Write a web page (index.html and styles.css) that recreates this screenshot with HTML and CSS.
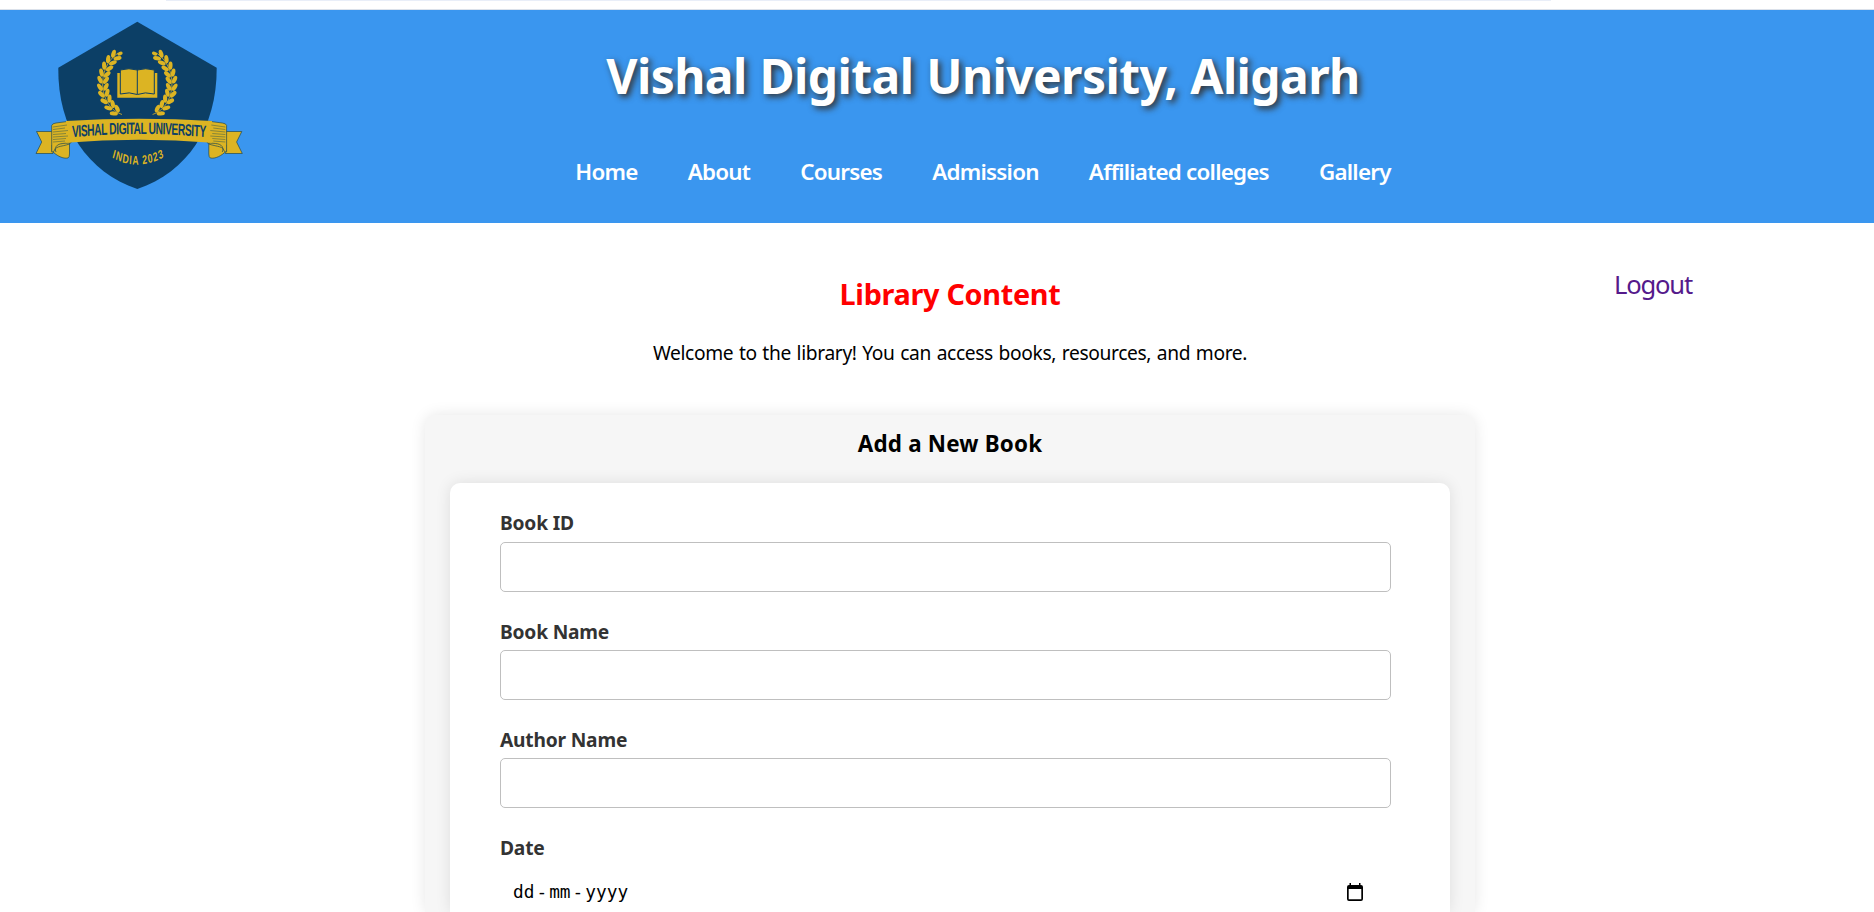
FILE: index.html
```html
<!DOCTYPE html>
<html lang="en">
<head>
<meta charset="utf-8">
<title>Library</title>
<link rel="stylesheet" href="styles.css">
</head>
<body>
<div class="strip"><div class="strip-line"></div></div>
<header class="header">
  <svg class="logo" viewBox="0 0 210 213" width="210" height="213">
    <defs>
      <g id="leafpair">
        <ellipse cx="-3" cy="0" rx="2.1" ry="4.1" transform="rotate(-30 -3 0)"/>
        <ellipse cx="3" cy="0" rx="2.1" ry="4.1" transform="rotate(30 3 0)"/>
      </g>
      <g id="laurel" fill="#dcb423">
        <path d="M87 104.500 C64 97 60 59 83 43" fill="none" stroke="#dcb423" stroke-width=".8"/>
        <use href="#leafpair" transform="translate(80.500 101) rotate(-56)"/>
        <use href="#leafpair" transform="translate(75.500 96) rotate(-42)"/>
        <use href="#leafpair" transform="translate(71.800 90) rotate(-27)"/>
        <use href="#leafpair" transform="translate(69.300 83.500) rotate(-15)"/>
        <use href="#leafpair" transform="translate(68 77) rotate(-4)"/>
        <use href="#leafpair" transform="translate(68 70) rotate(6)"/>
        <use href="#leafpair" transform="translate(69.300 63.500) rotate(18)"/>
        <use href="#leafpair" transform="translate(71.800 57) rotate(28)"/>
        <use href="#leafpair" transform="translate(75.500 51) rotate(38)"/>
        <use href="#leafpair" transform="translate(80.500 46) rotate(48)"/>
        <ellipse cx="85" cy="43.600" rx="1.900" ry="2.800" transform="rotate(65 85 43.600)"/>
      </g>
      <g id="ribbon-end" stroke="#23494f" stroke-width=".7" stroke-linejoin="round">
        <path d="M1.500 121.500 H18 V143.500 L1 143.500 L6.700 132Z" fill="#dcb423"/>
        <path d="M17 141 C22 146 28 149 33 148 Q34.500 147 34.500 144 V131 L17 135Z" fill="#dcb423"/>
        <path d="M16.700 115.500 Q17 113.500 21 113 L36 111 V133 C28 133.500 22 133 20.500 138 Q19 143 16.700 142Z" fill="#dcb423"/>
        <path d="M21 142 C18 136 26 137 34.500 134" fill="none"/>
      </g>
      <path id="ribbon-lines" d="M18 117 L32 115 M18 119.500 L30 118 M18 122 L33 120.500 M18 124.500 L31 123.500 M18 127 L33 126 M18 129.500 L31 128.500 M18 132 L30 131" fill="none" stroke="#4b6446" stroke-width=".6"/>
      <path id="name-path" d="M60 127.300 Q168.500 120.500 277 127.300"/>
      <path id="place-path" d="M110 147.500 Q146 162 184 147"/>
    </defs>
    <path d="M102.300 11.700 L181.700 57.700 C182 118 152 162 102.300 179 C52.600 162 22.600 118 23.300 57.700Z" fill="#0c3f66"/>
    <use href="#laurel"/>
    <use href="#laurel" transform="translate(204.600 0) scale(-1 1)"/>
    <path d="M82.300 63 H122.300 V87.700 H82.300Z" fill="#dcb423"/>
    <path d="M85.300 60 Q94 57.500 102.300 60 Q110.600 57.500 119.300 60 V84 Q110 81.500 102.300 84.500 Q94.600 81.500 85.300 84Z" fill="#dcb423" stroke="#0c3f66" stroke-width="1"/>
    <path d="M102.300 60 V84" stroke="#0c3f66" stroke-width="1"/>
    <use href="#ribbon-end"/>
    <use href="#ribbon-end" transform="translate(208.300 0) scale(-1 1)"/>
    <path d="M31 111 Q104 106.500 177 111 V132.800 Q104 126.500 31 132.800Z" fill="#dcb423"/>
    <use href="#ribbon-lines"/>
    <use href="#ribbon-lines" transform="translate(208.300 0) scale(-1 1)"/>
    <g transform="scale(.62 1)"><text class="logo-name"><textPath href="#name-path" textLength="216">VISHAL DIGITAL UNIVERSITY</textPath></text></g>
    <g transform="scale(.7 1)"><text class="logo-place"><textPath href="#place-path" textLength="76">INDIA 2023</textPath></text></g>
  </svg>
  <div class="head-main">
    <h1 class="title">Vishal Digital University, Aligarh</h1>
    <nav class="nav"><a>Home</a><a>About</a><a>Courses</a><a>Admission</a><a>Affiliated colleges</a><a>Gallery</a></nav>
  </div>
</header>
<main class="main">
  <a class="logout">Logout</a>
  <h2 class="heading">Library Content</h2>
  <p class="welcome">Welcome to the library! You can access books, resources, and more.</p>
  <section class="panel">
    <h3 class="panel-title">Add a New Book</h3>
    <form class="form">
      <label class="label label-first">Book ID</label><input class="input" type="text">
      <label class="label">Book Name</label><input class="input" type="text">
      <label class="label">Author Name</label><input class="input" type="text">
      <label class="label">Date</label>
      <div class="date">
        <span>dd</span><span>-</span><span>mm</span><span>-</span><span>yyyy</span>
        <svg class="calendar" viewBox="0 0 16 18" width="16" height="18"><path d="M2 2 H14 Q16 2 16 4 V16 Q16 18 14 18 H2 Q0 18 0 16 V4 Q0 2 2 2Z M1.700 6 V16.300 H14.300 V6Z" fill-rule="evenodd"/><path d="M2.500 0 H4 V3 H2.500Z M12 0 H13.500 V3 H12Z"/></svg>
      </div>
    </form>
  </section>
</main>
</body>
</html>
```
FILE: styles.css
```css
* { box-sizing: border-box; }
body { margin: 0; height: 912px; overflow: hidden; background: #fff; font-family: "Noto Sans", sans-serif; }
.strip { height: 10px; border-bottom: 1px solid #dbe1ea; }
.strip-line { margin: 0 323px 0 166px; height: 1px; background: #e9eef8; }
.header { height: 213px; background: #3a96ef; display: flex; padding-left: 35px; }
.logo { display: block; }
.logo-name { font: bold 16.5px "Liberation Sans", sans-serif; fill: #0c3f66; }
.logo-place { font: bold 12.5px "Liberation Sans", sans-serif; fill: #dcb423; }
.head-main { width: 1476px; display: flex; flex-direction: column; align-items: center; }
.title { margin: 33px 0 0; font-size: 48px; line-height: 66px; letter-spacing: -.6px; word-spacing: 1px; color: #fff; text-shadow: 3px 3px 6px #333; white-space: nowrap; }
.nav { display: flex; gap: 50.2px; margin-top: 48px; font-size: 22.4px; font-weight: 600; line-height: 30px; letter-spacing: -.78px; color: #fff; white-space: nowrap; }
.main { display: flex; flex-direction: column; align-items: center; position: relative; width: 1050px; height: 689px; margin-left: 425px; padding-top: 51px; }
.logout { position: absolute; left: 1189px; top: 44px; font-size: 25.6px; line-height: 36px; letter-spacing: -1.2px; color: #551a8b; }
.heading { margin: 0; font-size: 28.8px; line-height: 40px; letter-spacing: -.3px; color: #f00; }
.welcome { margin: 23px 0 0; font-size: 19.2px; line-height: 32px; letter-spacing: -.35px; word-spacing: 1px; }
.panel { width: 1050px; flex: 1; display: flex; flex-direction: column; margin-top: 46px; padding: 0 25px; background: #f6f6f6; border-radius: 12px 12px 0 0; box-shadow: 0 0 15px rgba(0,0,0,.1); }
.panel-title { margin: 14px 0 0; text-align: center; font-size: 22.4px; line-height: 30px; letter-spacing: .2px; }
.form { margin-top: 24px; flex: 1; background: #fff; border-radius: 10px 10px 0 0; box-shadow: 0 0 15px rgba(0,0,0,.1); padding: 27px 50px 0; }
.label { display: block; height: 32px; font-size: 19.2px; font-weight: 700; line-height: 27px; letter-spacing: -.2px; color: #333; }
.label-first { line-height: 25px; }
.input { display: block; width: 891px; height: 50px; margin-bottom: 26px; border: 1px solid #bfbfbf; border-radius: 5px; }
.date { display: flex; align-items: center; width: 863px; height: 30px; margin-top: 11px; padding-left: 12px; font: 17.8px/30px "DejaVu Sans Mono", monospace; color: #000; }
.date span { padding: 0 1px; }
.calendar { margin-left: auto; }
```
